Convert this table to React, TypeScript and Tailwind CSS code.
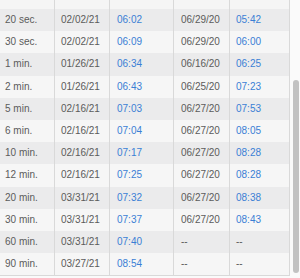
import React from "react";

const rows: [string, string, string, string, string][] = [
  ["20 sec.", "02/02/21", "06:02", "06/29/20", "05:42"],
  ["30 sec.", "02/02/21", "06:09", "06/29/20", "06:00"],
  ["1 min.", "01/26/21", "06:34", "06/16/20", "06:25"],
  ["2 min.", "01/26/21", "06:43", "06/25/20", "07:23"],
  ["5 min.", "02/16/21", "07:03", "06/27/20", "07:53"],
  ["6 min.", "02/16/21", "07:04", "06/27/20", "08:05"],
  ["10 min.", "02/16/21", "07:17", "06/27/20", "08:28"],
  ["12 min.", "02/16/21", "07:25", "06/27/20", "08:28"],
  ["20 min.", "03/31/21", "07:32", "06/27/20", "08:38"],
  ["30 min.", "03/31/21", "07:37", "06/27/20", "08:43"],
  ["60 min.", "03/31/21", "07:40", "--", "--"],
  ["90 min.", "03/27/21", "08:54", "--", "--"],
];

const widths = ["w-[55px]", "w-[55px]", "w-[64px]", "w-[56px]", "w-[60px]"];
const pads = ["pl-[5px]", "pl-[6px]", "pl-[7px]", "pl-[7px]", "pl-[6px]"];

export default function App() {
  return (
    <div
      className="w-[300px] h-[278px] bg-[#fafafa] flex overflow-hidden"
      style={{ fontFamily: '"Liberation Sans", Arial, sans-serif' }}
    >
      <div className="w-[290px] flex flex-col">
        <div className="h-[9px] flex bg-[#f5f5f5]">
          {widths.map((w, i) => (
            <div key={i} className={`${w} h-full border-r border-[#d9d9d9]`} />
          ))}
        </div>
        {rows.map((r, ri) => (
          <div
            key={ri}
            className={`h-[22.2px] flex ${ri % 2 === 0 ? "bg-[#ebebec]" : "bg-[#f6f6f6]"}`}
          >
            {r.map((c, ci) => {
              const blue = (ci === 2 || ci === 4) && c !== "--";
              return (
                <div
                  key={ci}
                  className={`${widths[ci]} ${pads[ci]} h-full border-r border-[#d9d9d9] flex items-center text-[10px] leading-none ${
                    blue ? "text-[#3a7fd5]" : "text-[#5b5b5b]"
                  }`}
                >
                  {c}
                </div>
              );
            })}
          </div>
        ))}
        <div className="h-px bg-[#d9d9d9]" />
      </div>
      <div className="w-[10px] flex justify-center pt-[80px] pl-[2px]">
        <div className="w-[6px] h-[193px] rounded-[3px] bg-[#c2c2c2]" />
      </div>
    </div>
  );
}
